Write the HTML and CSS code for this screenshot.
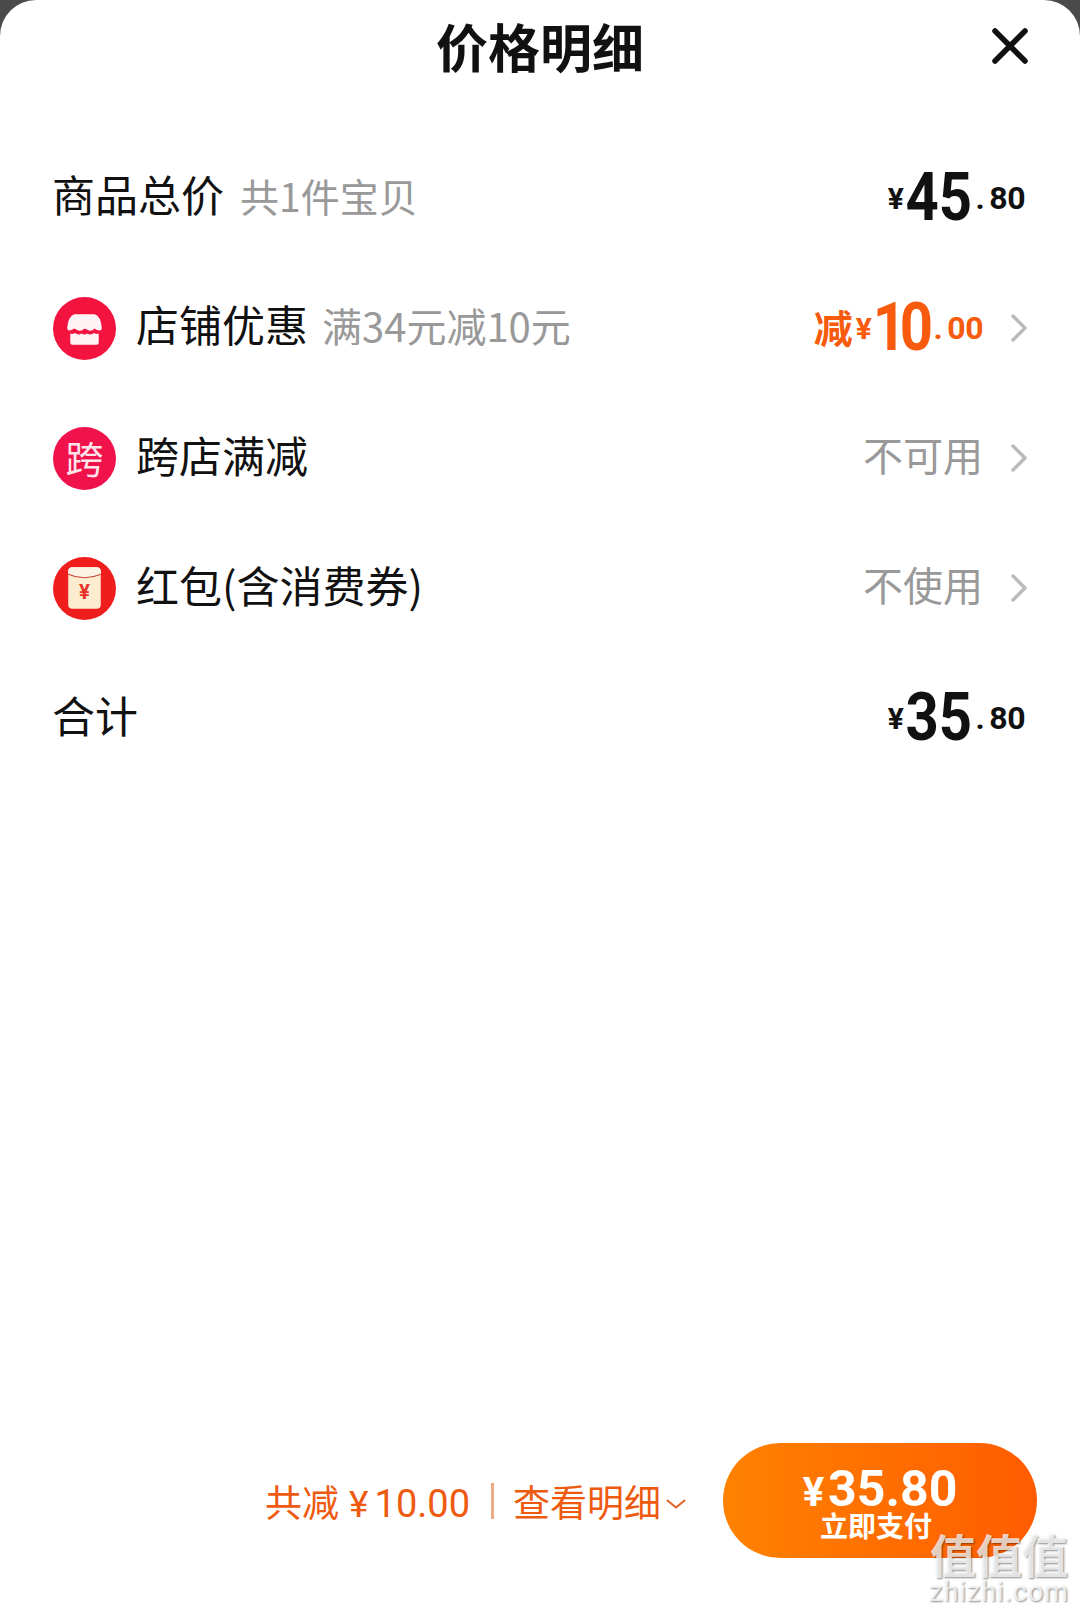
FILE: index.html
```html
<!DOCTYPE html>
<html lang="zh-CN">
<head>
    <meta charset="UTF-8">
    <meta name="viewport" content="width=device-width, initial-scale=1.0">
    <title>价格明细</title>
    <link rel="stylesheet" href="styles.css">
</head>
<body>
    <div class="sheet">
        <header class="header">
            <h2 class="title">价格明细</h2>
            <svg class="close" viewBox="0 0 36 36" width="36" height="36">
                <path d="M3 3 L33 33 M33 3 L3 33" fill="none" stroke="#111" stroke-width="5.500" stroke-linecap="round"/>
            </svg>
        </header>

        <div class="row">
            <div class="label"><span class="name">商品总价<span class="hint hint-small">共1件宝贝</span></span></div>
            <div class="price"><span class="yen">¥</span><span class="big">45</span><span class="small"><i class="dot">.</i>80</span></div>
        </div>

        <div class="row">
            <div class="label">
                <svg class="badge" viewBox="0 0 62 62" width="63" height="63">
                    <circle cx="31" cy="31" r="31" fill="#f3133f"/>
                    <path d="M21 17 H41 Q47 19 48 30 Q48 33 46 33 Q43 33 41 31 Q38 34 35.500 33 L31 31 Q28 34 25 33 L21 31 Q18 33 16 33 Q14 33 14 30 Q15 19 21 17 Z" fill="#fff" opacity="0.95"/>
                    <path d="M17 36 Q19 37 21.500 35.500 Q25 38 28 36 Q31 38 34 36 Q37 38 40.500 35.500 Q43 37 45 36 V45 Q45 47 43 47 H19 Q17 47 17 45 Z" fill="#fff" opacity="0.95"/>
                </svg>
                <span class="name">店铺优惠<span class="hint">满34元减10元</span></span>
            </div>
            <div class="value">
                <div class="price price-sale"><span class="sale">减</span><span class="yen">¥</span><span class="big">10</span><span class="small"><i class="dot">.</i>00</span></div>
                <svg class="chevron" viewBox="0 0 18 30" width="18" height="30"><path d="M3 3 L15 15 L3 27" fill="none" stroke="#bbb" stroke-width="3.500" stroke-linecap="round" stroke-linejoin="round"/></svg>
            </div>
        </div>

        <div class="row">
            <div class="label">
                <span class="badge badge-text">跨</span>
                <span class="name">跨店满减</span>
            </div>
            <div class="value">
                <span class="muted">不可用</span>
                <svg class="chevron" viewBox="0 0 18 30" width="18" height="30"><path d="M3 3 L15 15 L3 27" fill="none" stroke="#bbb" stroke-width="3.500" stroke-linecap="round" stroke-linejoin="round"/></svg>
            </div>
        </div>

        <div class="row">
            <div class="label">
                <svg class="badge" viewBox="0 0 62 62" width="63" height="63">
                    <circle cx="31" cy="31" r="31" fill="#f01d1d"/>
                    <rect x="15" y="10" width="32" height="41" rx="4" fill="#fdeccf"/>
                    <path d="M15 14 Q15 10 19 10 H43 Q47 10 47 14 V17 Q31 24 15 17 Z" fill="#fbf3e4"/>
                    <path d="M15 17 Q31 24 47 17" fill="none" stroke="#c9443a" stroke-width="1"/>
                    <text class="packet-yen" x="31" y="41" text-anchor="middle">¥</text>
                </svg>
                <span class="name">红包(含消费券)</span>
            </div>
            <div class="value">
                <span class="muted">不使用</span>
                <svg class="chevron" viewBox="0 0 18 30" width="18" height="30"><path d="M3 3 L15 15 L3 27" fill="none" stroke="#bbb" stroke-width="3.500" stroke-linecap="round" stroke-linejoin="round"/></svg>
            </div>
        </div>

        <div class="row">
            <div class="label"><span class="name">合计</span></div>
            <div class="price"><span class="yen">¥</span><span class="big">35</span><span class="small"><i class="dot">.</i>80</span></div>
        </div>

        <footer class="footer">
            <span class="saved">共减<span class="saved-yen">¥</span><span class="saved-num">10.00</span></span>
            <span class="divider"></span>
            <span class="detail">查看明细</span>
            <svg class="caret" viewBox="0 0 20 10" width="20" height="10"><path d="M1.500 1.500 L10 8.500 L18.500 1.500" fill="none" stroke="#e0622a" stroke-width="2" stroke-linecap="round" stroke-linejoin="round"/></svg>
            <button class="pay">
                <span class="pay-price"><span class="pay-yen">¥</span>35.80</span>
                <span class="pay-text">立即支付</span>
            </button>
        </footer>

        <div class="watermark">
            <div class="wm-mark">值值值</div>
            <div class="wm-site">zhizhi.com</div>
        </div>
    </div>
</body>
</html>
```

FILE: styles.css
```css
html, body {
    margin: 0;
    padding: 0;
    height: 100%;
}

body {
    background: #4a4a4a;
    font-family: "Noto Sans CJK SC", "Noto Sans", sans-serif;
    color: #111;
}

.sheet {
    position: relative;
    height: 1611px;
    overflow: hidden;
    background: #fff;
    border-radius: 36px 36px 0 0;
    display: flex;
    flex-direction: column;
}

.header {
    height: 133px;
    flex: none;
    padding: 0 52px;
    display: grid;
    grid-template-columns: 1fr auto 1fr;
    align-items: start;
}

.title {
    grid-column: 2;
    margin: 0;
    font-size: 52px;
    font-weight: 700;
    line-height: 92px;
    color: #111;
}

.close {
    grid-column: 3;
    justify-self: end;
    margin-top: 28px;
}

.row {
    height: 130px;
    flex: none;
    padding: 0 52px;
    display: flex;
    align-items: center;
    justify-content: space-between;
}

.label {
    display: flex;
    align-items: center;
    font-size: 43px;
    line-height: 60px;
    color: #111;
}

.name {
    padding-bottom: 8px;
}

.hint {
    margin-left: 14px;
    font-size: 40px;
    color: #999;
}

.hint-small {
    margin-left: 16px;
    font-size: 39px;
}

.badge {
    width: 63px;
    height: 63px;
    flex: none;
    margin: 0 20px 0 1px;
}

.badge-text {
    border-radius: 50%;
    background: #f0124a;
    color: #ffe3ea;
    font-size: 38px;
    line-height: 60px;
    text-align: center;
}

.packet-yen {
    font-family: "Roboto", sans-serif;
    font-size: 20px;
    font-weight: 700;
    fill: #e8322a;
}

.value {
    display: flex;
    align-items: center;
    gap: 27px;
}

.muted {
    font-size: 40px;
    line-height: 60px;
    padding-bottom: 8px;
    color: #999;
}

.price {
    display: flex;
    align-items: center;
    padding-right: 3px;
    font-family: "Roboto", sans-serif;
    font-weight: 700;
    color: #111;
}

.yen {
    font-size: 30px;
    margin-right: 1px;
}

/* digits are narrow and tall in the shot, Roboto needs squeezing */
.big {
    display: inline-block;
    font-size: 66px;
    line-height: 70px;
    margin: 0 -4px;
    transform: scaleX(0.88);
}

.small {
    font-size: 32px;
    letter-spacing: -0.5px;
    margin-left: 3px;
}

.dot {
    font-style: normal;
    margin-right: 5px;
}

.price-sale {
    padding-right: 0;
    color: #f85a0e;
}

.price-sale .big {
    letter-spacing: -7px;
}

.price-sale .small {
    margin-left: 7px;
}

.sale {
    font-family: "Noto Sans CJK SC", sans-serif;
    font-size: 39px;
    margin-right: 3px;
    padding-bottom: 4px;
}

.footer {
    position: absolute;
    right: 43px;
    bottom: 53px;
    display: flex;
    align-items: center;
    color: #ee5a10;
    font-size: 37px;
}

.saved-yen {
    margin: 0 6px 0 10px;
    font-family: "Roboto", sans-serif;
}

.saved-num {
    font-family: "Roboto", sans-serif;
    font-size: 38px;
}

.divider {
    width: 3px;
    height: 36px;
    margin: 0 19px 0 21px;
    background: #eeaa88;
}

.caret {
    margin: 6px 37px 0 5px;
}

.pay {
    width: 314px;
    height: 115px;
    border: none;
    border-radius: 58px;
    background: linear-gradient(90deg, #ff8200, #ff5c00);
    color: #fff;
    display: flex;
    flex-direction: column;
    align-items: center;
    justify-content: center;
    padding: 0;
    font-family: "Noto Sans CJK SC", sans-serif;
}

.pay-price {
    font-family: "Roboto", sans-serif;
    font-size: 50px;
    font-weight: 700;
    line-height: 50px;
}

.pay-yen {
    font-size: 40px;
    margin-right: 4px;
}

.pay-text {
    font-size: 28px;
    font-weight: 700;
    line-height: 24px;
    margin: -5px 8px 0 0;
}

.watermark {
    position: absolute;
    left: 926px;
    top: 1528px;
    width: 146px;
    text-align: center;
    color: rgba(255, 255, 255, 0.75);
    text-shadow: 1px 1px 2px rgba(0, 0, 0, 0.45);
}

.wm-mark {
    font-size: 46px;
    font-weight: 700;
    line-height: 50px;
}

.wm-site {
    font-family: "Roboto", sans-serif;
    font-size: 27px;
    letter-spacing: 1px;
    line-height: 24px;
    margin-top: 2px;
}
```
